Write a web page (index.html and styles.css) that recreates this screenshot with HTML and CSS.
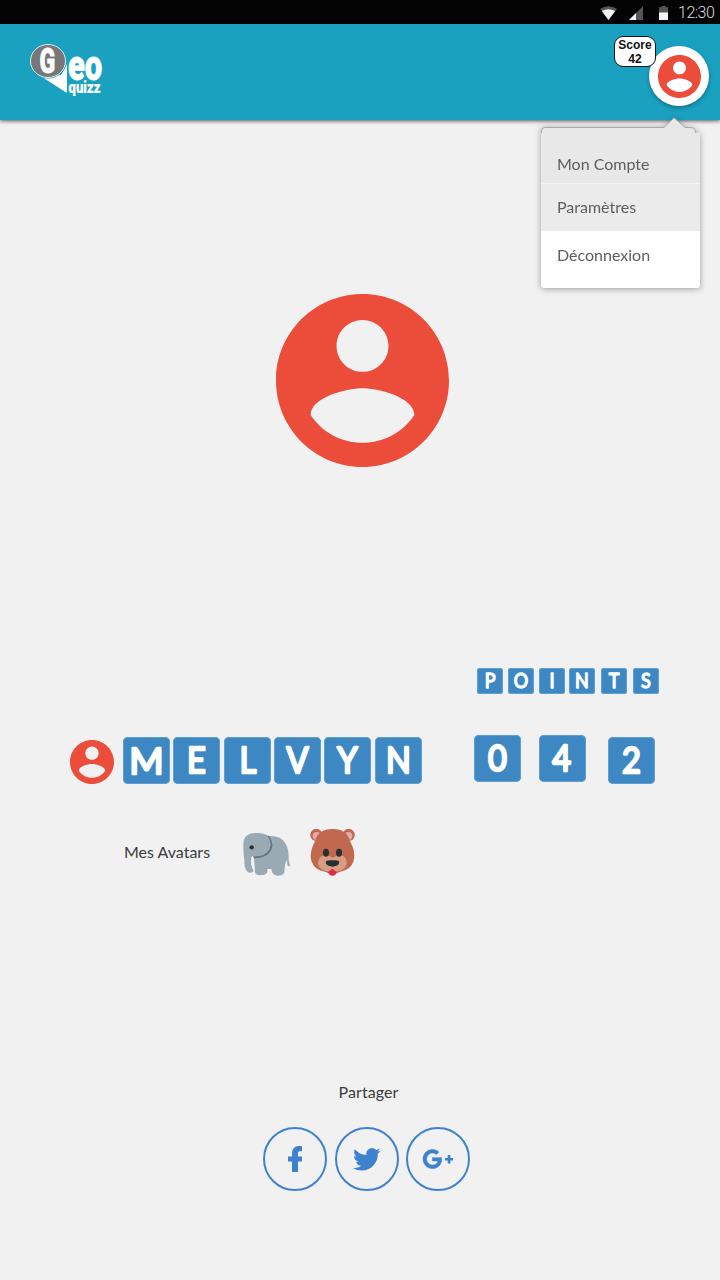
FILE: index.html
```html
<!DOCTYPE html>
<html lang="fr">
<head>
<meta charset="utf-8">
<title>Geo Quizz</title>
<link rel="stylesheet" href="styles.css">
</head>
<body>
<svg width="0" height="0" class="defs">
  <symbol id="account" viewBox="2 2 20 20"><path d="M12 2C6.48 2 2 6.48 2 12s4.48 10 10 10 10-4.48 10-10S17.52 2 12 2zm0 3c1.66 0 3 1.34 3 3s-1.34 3-3 3-3-1.34-3-3 1.34-3 3-3zm0 14.2c-2.5 0-4.71-1.28-6-3.22.03-1.99 4-3.08 6-3.08 1.99 0 5.97 1.09 6 3.08-1.29 1.94-3.5 3.22-6 3.22z"/></symbol>
</svg>
<div class="status">
  <svg class="wifi" width="17" height="14" viewBox="0 0 17 14"><path fill="#555" d="M0 3Q8.500-2.500 17 3L8.500 14z"/><path fill="#f4f4f4" d="M1.800 5Q8.500 1.500 15.200 5L8.500 14z"/></svg>
  <svg class="signal" width="14" height="14" viewBox="0 0 14 14"><path fill="#555" d="M14 0v14H0z"/><path fill="#f4f4f4" d="M7 7v7H0z"/></svg>
  <svg class="battery" width="9" height="14" viewBox="0 0 9 14"><path fill="#555" d="M2.500 0h4v1.300H9V7H0V1.300h2.500z"/><path fill="#f4f4f4" d="M0 6.500h9V14H0z"/></svg>
  <span class="time">12:30</span>
</div>
<header class="header">
  <svg class="logo" width="78" height="56" viewBox="28 42 78 56">
    <path fill="#fff" d="M42 77L61 75 67 64V93z"/>
    <ellipse cx="48" cy="61" rx="18.500" ry="17.500" fill="#1aa1c0"/>
    <ellipse cx="48" cy="61" rx="17.500" ry="16.500" fill="#777" stroke="#d8eef3" stroke-width="1"/>
    <text class="logo-text" transform="translate(39.400 73) scale(.66 1)" font-size="35">G</text>
    <text class="logo-text" transform="translate(67.900 80) scale(.77 1)" font-size="42" textLength="44.500" lengthAdjust="spacingAndGlyphs">eo</text>
    <text class="logo-text small" transform="translate(68.600 92.700)" font-size="17" textLength="31.800" lengthAdjust="spacingAndGlyphs">quizz</text>
  </svg>
  <div class="user">
    <div class="score">Score<br>42</div>
    <div class="avatar"><svg width="43" height="43"><use href="#account"/></svg></div>
    <nav class="menu">
      <svg class="menu-top" width="159" height="16" viewBox="1 0 159 16"><path d="M1.500 17V14Q1.500 10.500 5 10.500H124L134 .800 145 10.500H150Q155.500 10.500 155.500 15V17" fill="#e8e8e8" stroke="#aaa"/></svg>
      <a class="item first">Mon Compte</a>
      <a class="item second">Paramètres</a>
      <a class="item last">Déconnexion</a>
    </nav>
  </div>
</header>
<main class="profile">
  <svg class="portrait" width="173" height="173"><use href="#account"/></svg>
  <section class="identity">
    <div class="name">
      <svg class="mini" width="44" height="44"><use href="#account"/></svg>
      <svg class="tile" viewBox="0 0 47 47"><text class="broad" x="23.500" y="36.500">M</text></svg>
      <svg class="tile" viewBox="0 0 47 47"><text x="23.500" y="36.500">E</text></svg>
      <svg class="tile wide" viewBox="0 0 47 47"><text x="24" y="36.500">L</text></svg>
      <svg class="tile" viewBox="0 0 47 47"><text x="23.500" y="36.500">V</text></svg>
      <svg class="tile" viewBox="0 0 47 47"><text x="23.500" y="36.500">Y</text></svg>
      <svg class="tile wide" viewBox="0 0 47 47"><text x="23.500" y="36.500">N</text></svg>
    </div>
    <div class="points">
      <div class="label">
        <svg class="tile" viewBox="0 0 47 47"><text x="24" y="36.500">P</text></svg>
        <svg class="tile" viewBox="0 0 47 47"><text x="23.500" y="36.500">O</text></svg>
        <svg class="tile" viewBox="0 0 47 47"><text x="23.500" y="36.500">I</text></svg>
        <svg class="tile near" viewBox="0 0 47 47"><text x="23.500" y="36.500">N</text></svg>
        <svg class="tile far" viewBox="0 0 47 47"><text x="23.500" y="36.500">T</text></svg>
        <svg class="tile far" viewBox="0 0 47 47"><text x="23.500" y="36.500">S</text></svg>
      </div>
      <div class="digits">
        <svg class="tile" viewBox="0 0 47 47"><text x="23.500" y="36.500">0</text></svg>
        <svg class="tile" viewBox="0 0 47 47"><text x="22.500" y="36.500">4</text></svg>
        <svg class="tile low" viewBox="0 0 47 47"><text x="23.500" y="36.500">2</text></svg>
      </div>
    </div>
  </section>
  <section class="avatars">
    <span class="avatars-label">Mes Avatars</span>
    <svg class="elephant" width="48" height="45" viewBox="24 36 144 135">
      <path fill="#9aaab4" d="M25 75Q24 40 62 39Q87 38 100 48Q137 45 151 70Q162 88 161 119L165 137Q161 141 157 136L156 120Q149 127 148 158Q145 167 127 167Q111 166 109 147H97V157Q93 166 76 166Q59 165 59 153L57 110Q49 103 50 118Q48 142 56 150Q54 160 42 158Q27 153 28 120Q25 103 25 75z"/>
      <path fill="none" stroke="#66757f" stroke-width="6" d="M99 48Q115 68 106 89Q94 113 54 112"/>
      <path fill="#9aaab4" d="M97 47Q112 67 103 86Q90 109 54 109V70z"/>
      <path fill="#f1f1f1" d="M49 112L56 110 59 153 55 151Q46 135 49 112z"/>
      <circle cx="50" cy="82" r="6.500" fill="#292f33"/>
    </svg>
    <svg class="bear" width="47" height="48" viewBox="222 24 141 144">
      <circle cx="244" cy="45" r="18.500" fill="#c1694f"/><circle cx="341" cy="45" r="18.500" fill="#c1694f"/>
      <circle cx="245" cy="48" r="12" fill="#e6aaaa"/><circle cx="340" cy="48" r="12" fill="#e6aaaa"/>
      <path fill="#c1694f" d="M293 27Q337 27 346 66Q358 85 358 109Q356 148 313 156L293 166 272 156Q229 148 227 109Q228 85 239 66Q248 27 293 27z"/>
      <path fill="#d99e82" d="M293 113Q309 103 324 108Q336 115 335 132Q331 151 304 155H281Q253 151 249 132Q249 115 261 108Q277 103 293 113z"/>
      <ellipse cx="273" cy="98" rx="9" ry="12" fill="#292f33"/><ellipse cx="312" cy="98" rx="9" ry="12" fill="#292f33"/>
      <path fill="#292f33" d="M293 121Q311 119 313 126Q313 138 293 140Q272 138 272 126Q274 119 293 121z"/>
      <path fill="#dd2e44" d="M292 146L305 155Q303 167 292 167Q281 166 280 155z"/>
    </svg>
  </section>
  <section class="share">
    <span class="share-label">Partager</span>
    <div class="networks">
      <svg class="network" width="64" height="64" viewBox="0 0 64 64"><circle cx="32" cy="32" r="31"/><path d="M29 45V34.500H25V29.500H29V27Q29 19 36 19H39V24.300H36.500Q35 24.300 35 26V29.500H39V34.500H35V45z"/></svg>
      <svg class="network" width="64" height="64" viewBox="0 0 64 64"><circle cx="32" cy="32" r="31"/><path transform="translate(18 18.500) scale(1.150)" d="M23.953 4.570a10 10 0 0 1-2.825.775 4.958 4.958 0 0 0 2.163-2.723c-.951.555-2.005.959-3.127 1.184a4.920 4.920 0 0 0-8.384 4.482C7.690 8.095 4.067 6.130 1.640 3.162a4.822 4.822 0 0 0-.666 2.475c0 1.710.870 3.213 2.188 4.096a4.904 4.904 0 0 1-2.228-.616v.060a4.923 4.923 0 0 0 3.946 4.827 4.996 4.996 0 0 1-2.212.085 4.936 4.936 0 0 0 4.604 3.417 9.867 9.867 0 0 1-6.102 2.105c-.390 0-.779-.023-1.170-.067a13.995 13.995 0 0 0 7.557 2.209c9.053 0 13.998-7.496 13.998-13.985 0-.210 0-.420-.015-.630A9.935 9.935 0 0 0 24 4.590z"/></svg>
      <svg class="network google" width="64" height="64" viewBox="0 0 64 64"><circle cx="32" cy="32" r="31"/><path class="bold" transform="translate(17 15.700) scale(1.360)" d="M7 11v2.400h3.970c-.160 1.030-1.200 3.020-3.970 3.020-2.390 0-4.340-1.980-4.340-4.420S4.610 7.580 7 7.580c1.360 0 2.270.580 2.790 1.080l1.900-1.830C10.470 5.690 8.890 5 7 5c-3.870 0-7 3.130-7 7s3.130 7 7 7c4.040 0 6.720-2.840 6.720-6.840 0-.460-.050-.810-.110-1.160H7z"/><path d="M41.700 28h2.700v3H47v2.600h-2.600v3h-2.700v-3H39V31h2.700z"/></svg>
    </div>
  </section>
</main>
</body>
</html>
```
FILE: styles.css
```css
* { box-sizing: border-box; }
body {
  margin: 0;
  width: 720px;
  height: 1280px;
  overflow: hidden;
  display: flex;
  flex-direction: column;
  background: #f1f1f1;
  font-family: Lato, "Open Sans", sans-serif;
}
svg { display: block; flex: none; overflow: visible; }
.defs { position: absolute; }
.status {
  height: 24px;
  flex: none;
  background: #030303;
  display: flex;
  justify-content: flex-end;
  align-items: center;
  padding: 1px 6px 0 0;
}
.signal { margin-left: 12px; }
.battery { margin-left: 16px; }
.time {
  width: 36px;
  margin-left: 10px;
  font: 300 16px/24px Roboto, sans-serif;
  letter-spacing: -.5px;
  color: #ddd;
  white-space: nowrap;
}
.header {
  height: 96px;
  flex: none;
  display: flex;
  justify-content: space-between;
  align-items: flex-start;
  padding: 18px 11px 0 28px;
  background: #1aa1c0;
  box-shadow: 0 1px 4px rgba(0, 0, 0, .65);
}
.logo-text { font-family: Roboto, sans-serif; font-weight: 900; fill: #fff; stroke: #fff; stroke-width: .8px; }
.logo-text.small { stroke-width: .2px; }
.user { position: relative; display: flex; align-items: flex-start; }
.score {
  position: relative;
  z-index: 1;
  width: 42px;
  height: 31px;
  margin: -6px -7px 0 0;
  padding-top: 1px;
  border: 1px solid #111;
  border-radius: 9px;
  background: #fff;
  color: #111;
  text-align: center;
  font: bold 12px/14px "Liberation Sans", sans-serif;
}
.avatar {
  width: 60px;
  height: 60px;
  margin-top: 4px;
  display: grid;
  place-items: center;
  border-radius: 50%;
  background: #fff;
  box-shadow: 0 2px 4px rgba(0, 0, 0, .3);
  fill: #ec4c3a;
}
.menu {
  position: absolute;
  z-index: 2;
  top: 75px;
  right: 9px;
  width: 159px;
  display: flex;
  flex-direction: column;
  color: #5e5e5e;
  font-size: 16px;
  filter: drop-shadow(0 1px 3px rgba(0, 0, 0, .35));
}
.menu-top { overflow: hidden; }
.item { display: flex; align-items: center; padding-left: 16px; }
.first { height: 50px; padding-top: 10px; background: #e8e8e8; }
.second { height: 48px; padding-bottom: 2px; background: #ebebeb; border-top: 1px solid #f3f3f3; }
.last { height: 57px; padding-bottom: 11px; background: #fff; border-radius: 0 0 3px 3px; }
.profile { flex: 1; display: flex; flex-direction: column; align-items: flex-start; }
.portrait { margin: 174px 0 0 276px; fill: #ec4c3a; }
.identity { width: 720px; margin-top: 201px; padding: 0 60px 0 70px; display: flex; justify-content: space-between; align-items: flex-end; }
.name { display: flex; align-items: center; gap: 3px; }
.mini { fill: #ec4c3a; margin: 2px 6px 0 0; }
.tile { width: 47px; height: 47px; border-radius: 5px; background: #3d88c3; box-shadow: inset 0 0 0 1px #5da0d1; }
.name .wide { margin-left: 1px; }
.tile text {
  font: 400 37px Lato, sans-serif;
  fill: #fff;
  stroke: #fff;
  stroke-width: 2.5px;
  stroke-linejoin: round;
  text-anchor: middle;
  transform: scaleX(.88);
  transform-origin: 23.5px 0;
}
.tile .broad { transform: none; }
.points { width: 186px; }
.label { display: flex; gap: 5px; padding-left: 3px; }
.label .tile { width: 26px; height: 26px; border-radius: 3px; }
.label .near { margin-left: -1px; }
.label .far { margin-left: 1px; }
.digits { display: flex; margin-top: 41px; gap: 18px; }
.low { margin: 2px 0 0 4px; }
.avatars { display: flex; align-items: center; height: 49px; margin: 43px 0 0 124px; color: #3c3c3c; font-size: 16px; }
.avatars-label { width: 119px; white-space: nowrap; }
.elephant { margin-top: 5px; }
.bear { margin-left: 18px; }
.share { margin: 206px 0 0 263px; width: 207px; display: flex; flex-direction: column; align-items: center; color: #3c3c3c; font-size: 16px; }
.share-label { padding-left: 4px; line-height: 20px; letter-spacing: .1px; }
.networks { display: flex; gap: 8px; margin-top: 25px; }
.network { fill: #3e82cf; }
.network circle { fill: none; stroke: #3e82cf; stroke-width: 2px; }
.google { margin-left: -1px; }
.bold { stroke: #3e82cf; stroke-width: .4px; }
```
